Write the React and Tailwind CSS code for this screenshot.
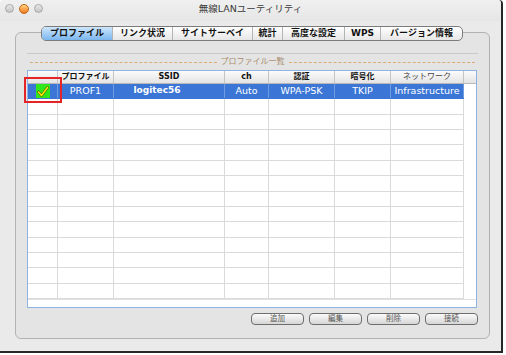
import React from "react";

const cols = [30, 56, 111, 44, 66, 56, 73];
const headers = [
  { t: "", b: true },
  { t: "プロファイル", b: true },
  { t: "SSID", b: true },
  { t: "ch", b: true },
  { t: "認証", b: true },
  { t: "暗号化", b: true },
  { t: "ネットワーク", b: false },
];

function Check() {
  return (
    <div className="w-[14px] h-full bg-[#2ee81c] flex items-center justify-center">
      <svg width="12" height="11" viewBox="0 0 12 11">
        <path d="M1.5 6 L4.5 9.5 L10.5 1.5" fill="none" stroke="#5a5200" strokeWidth="2.6" strokeLinecap="round" strokeLinejoin="round" />
        <path d="M1.5 6 L4.5 9.5 L10.5 1.5" fill="none" stroke="#fff200" strokeWidth="1.4" strokeLinecap="round" strokeLinejoin="round" />
      </svg>
    </div>
  );
}

function Row({ selected }) {
  const cells = selected
    ? [
        <Check key="c" />,
        <span key="p">PROF1</span>,
        <span key="s" className="font-bold text-[9px] pl-[2px] mr-[26px]">logitec56</span>,
        <span key="ch">Auto</span>,
        <span key="a">WPA-PSK</span>,
        <span key="e">TKIP</span>,
        <span key="n">Infrastructure</span>,
      ]
    : cols.map(() => null);
  return (
    <div
      className={
        "flex h-[15.36px] border-b " +
        (selected ? "bg-[#3b76d6] text-white border-[#3b76d6]" : "border-[#dadada]")
      }
    >
      {cols.map((w, i) => (
        <div
          key={i}
          style={{ width: w }}
          className={
            "shrink-0 h-full flex items-center justify-center text-[9.5px] border-r " +
            (selected ? "border-[#6f9be0]" : "border-[#dadada]")
          }
        >
          {cells[i]}
        </div>
      ))}
    </div>
  );
}

const tabs = [
  { t: "プロファイル", w: 71 },
  { t: "リンク状況", w: 60 },
  { t: "サイトサーベイ", w: 80 },
  { t: "統計", w: 30 },
  { t: "高度な設定", w: 62 },
  { t: "WPS", w: 36 },
  { t: "バージョン情報", w: 81 },
];

export default function App() {
  return (
    <div className="w-[506px] h-[355px] bg-white overflow-hidden relative font-['DejaVu_Sans','Noto_Sans_CJK_JP',sans-serif]">
      <div className="w-[503px] h-[353px] bg-[#eaeaea] border-r-2 border-b-2 border-[#262626] rounded-tl-[4px] rounded-tr-[4px] flex flex-col">
        {/* title bar */}
        <div className="h-[21px] shrink-0 grid grid-cols-[1fr_auto_1fr] items-center bg-gradient-to-b from-[#f0f0f0] to-[#e6e6e6] rounded-t-[4px]">
          <div className="flex items-center gap-[5px] pl-[5px] -mt-[4px]">
            <div className="w-[9px] h-[9px] rounded-full border border-[#a8a8a8] bg-gradient-to-b from-[#e8e8e8] to-[#c4c4c4]" />
            <div className="w-[10px] h-[10px] rounded-full border border-[#c0641c] bg-gradient-to-b from-[#ffd27a] to-[#f07a18]" />
            <div className="w-[9px] h-[9px] rounded-full border border-[#a8a8a8] bg-gradient-to-b from-[#e8e8e8] to-[#c4c4c4]" />
          </div>
          <div className="text-[9.5px] text-[#3a3a3a] -mt-[2px]">無線LANユーティリティ</div>
          <div />
        </div>

        {/* body */}
        <div className="flex flex-col pl-[15px] pt-[5px]">
          {/* tabs */}
          <div className="relative z-10 ml-[26px] flex h-[15px] w-fit rounded-[5px] border border-[#7c7c7c] bg-gradient-to-b from-[#ffffff] to-[#e6e6e6] overflow-hidden">
            {tabs.map((t, i) => (
              <div
                key={i}
                style={{ width: t.w }}
                className={
                  "shrink-0 flex items-center justify-center text-[9px] font-bold text-[#111] leading-none " +
                  (i < tabs.length - 1 ? "border-r border-[#b4b4b4] " : "") +
                  (i === 0 ? "bg-gradient-to-b from-[#cde6fc] to-[#7ab6ef]" : "")
                }
              >
                {t.t}
              </div>
            ))}
          </div>

          {/* group box */}
          <div className="-mt-[9px] w-[475px] h-[307px] rounded-[6px] border border-[#b2b2b2] bg-[#e4e4e4] flex flex-col px-[11px] pt-[20px]">
            <div className="border-t border-[#c9c9c9] flex flex-col">
              {/* title */}
              <div className="h-[16px] flex items-center gap-[4px] px-[3px]">
                <div className="flex-1 border-t border-dashed border-[#d9ad78]" />
                <div className="text-[8px] text-[#a88c6c] leading-none">プロファイル一覧</div>
                <div className="flex-1 border-t border-dashed border-[#d9ad78]" />
              </div>
              {/* table */}
              <div className="relative w-[450px] h-[238px] border border-[#90b2e4] bg-white flex flex-col">
                {/* header */}
                <div className="flex h-[13px] border-b border-[#b8b8b8] bg-gradient-to-b from-[#fbfbfb] to-[#e4e4e4]">
                  {headers.map((h, i) => (
                    <div
                      key={i}
                      style={{ width: cols[i] }}
                      className={
                        "shrink-0 flex items-center justify-center border-r border-[#c4c4c4] text-[8px] leading-none " +
                        (h.b ? "font-bold text-[#111]" : "text-[#444]")
                      }
                    >
                      {h.t}
                    </div>
                  ))}
                  <div className="flex-1" />
                </div>
                <div className="flex flex-col w-[436px]">
                  <Row selected />
                  {Array.from({ length: 13 }).map((_, i) => (
                    <Row key={i} />
                  ))}
                </div>
                <div className="flex-1 border-t border-[#e0e0e0]" />
              </div>
              {/* buttons */}
              <div className="flex justify-end gap-[5px] mt-[5px]">
                {["追加", "編集", "削除", "接続"].map((b) => (
                  <div
                    key={b}
                    className="w-[53px] h-[12px] rounded-[4px] border border-[#6e6e6e] bg-gradient-to-b from-[#fbfbfb] to-[#d6d6d6] flex items-center justify-center text-[7.5px] text-[#555] leading-none"
                  >
                    {b}
                  </div>
                ))}
              </div>
            </div>
          </div>
        </div>
      </div>
      {/* red annotation box */}
      <div className="absolute left-[24px] top-[77px] w-[38px] h-[26px] border-2 border-[#e3252a]" />
    </div>
  );
}
